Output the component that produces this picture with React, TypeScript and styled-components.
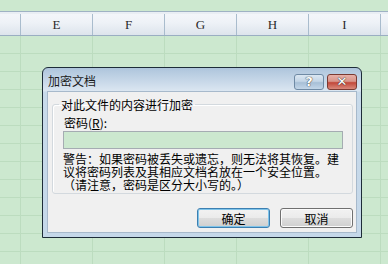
import React from "react";
import styled, { createGlobalStyle } from "styled-components";

const GlobalStyle = createGlobalStyle`
  html, body {
    margin: 0;
    padding: 0;
    background: #cce8cf;
    overflow: hidden;
  }
  body {
    font-family: "Noto Sans CJK SC", "Liberation Sans", sans-serif;
    font-size: 12px;
  }
`;

const Page = styled.div`
  position: relative;
  width: 388px;
  height: 264px;
  overflow: hidden;
  background: #cce8cf;
`;

const TopStrip = styled.div`
  height: 11px;
  border-bottom: 1px solid #9fb2c4;
`;

const HeaderRow = styled.div`
  display: grid;
  grid-template-columns: 21px repeat(6, 72px);
  height: 21px;
  background: linear-gradient(#f3f6fa 0%, #eef2f7 40%, #dde4ec 100%);
  border-top: 2px solid #e9eef4;
  border-bottom: 1px solid #9aaec2;
`;

const HeaderCell = styled.div`
  display: flex;
  align-items: center;
  justify-content: center;
  border-right: 1px solid #a9bccd;
  font-family: "Liberation Serif", serif;
  font-size: 13px;
  color: #2a2a2a;
`;

const GridRow = styled.div`
  display: grid;
  grid-template-columns: 21px repeat(6, 72px);
  height: 18px;
`;

const GridCell = styled.div`
  border-right: 1px solid #bcdcbf;
  border-bottom: 1px solid #bcdcbf;
`;

const Dialog = styled.div`
  position: absolute;
  left: 42px;
  top: 67px;
  width: 318px;
  height: 169px;
  border: 1px solid #1d2c38;
  border-radius: 6px 6px 0 0;
  background: linear-gradient(#aec5dc 0px, #c9d9e9 14px, #dbe6f1 23px, #c8daea 24px, #c5d8e9 100%);
  display: flex;
  flex-direction: column;
`;

const TitleBar = styled.div`
  height: 22px;
  display: flex;
  align-items: center;
  padding: 0 4px 0 5px;
`;

const Title = styled.div`
  flex: 1;
  font-size: 12px;
  color: #1a1a1a;
  margin-top: 2px;
`;

const CaptionButton = styled.div<{ $close?: boolean }>`
  width: 28px;
  height: 14px;
  margin-left: 3px;
  margin-top: 5px;
  border: 1px solid ${(p) => (p.$close ? "#7a3a32" : "#6f8aa4")};
  border-radius: 3px;
  background: ${(p) =>
    p.$close
      ? "linear-gradient(#e7b0a8 0%, #d8958a 45%, #c2483a 55%, #d98a7c 100%)"
      : "linear-gradient(#dbe7f2 0%, #c3d5e6 45%, #a7bfd6 55%, #c3d6e8 100%)"};
  display: flex;
  align-items: center;
  justify-content: center;
  font-family: "DejaVu Sans", sans-serif;
  font-weight: bold;
  font-size: 13px;
  color: #fff;
  text-shadow: 0 0 1px #333, 0 0 1px #333;
`;

const Body = styled.div`
  flex: 1;
  margin: 1px 4px 4px 4px;
  background: #f0f0f0;
  border: 1px solid #a7b9cb;
  padding: 6px 3px 0 4px;
  display: flex;
  flex-direction: column;
`;

const Group = styled.fieldset`
  margin: 0;
  padding: 5px 9px 2px 10px;
  border: 1px solid #d3d9de;
  border-radius: 3px;
  box-shadow: inset 1px 1px 0 #fff;
  min-width: 0;
`;

const Legend = styled.legend`
  padding: 0 2px;
  margin-left: -4px;
  font-size: 12px;
  line-height: 13px;
  color: #000;
`;

const Label = styled.div`
  font-size: 12px;
  line-height: 13px;
  color: #000;
  margin-left: 1px;
`;

const Underline = styled.span`
  text-decoration: underline;
`;

const PasswordInput = styled.div`
  margin-top: 2px;
  height: 16px;
  border: 1px solid #a5acb2;
  background: #cce8cf;
`;

const Warning = styled.div`
  margin-top: 3px;
  font-size: 12px;
  line-height: 13px;
  color: #000;
  white-space: nowrap;
`;

const ButtonRow = styled.div`
  display: flex;
  justify-content: flex-end;
  gap: 10px;
  margin-top: 14px;
`;

const Button = styled.div<{ $default?: boolean }>`
  width: 71px;
  height: 18px;
  border: 1px solid ${(p) => (p.$default ? "#3c7fb1" : "#707070")};
  border-radius: 3px;
  background: linear-gradient(#f2f2f2 0%, #ebebeb 48%, #dddddd 52%, #cfcfcf 100%);
  box-shadow: ${(p) => (p.$default ? "inset 0 0 0 1px #7fc4ea" : "inset 0 0 0 1px #fbfbfb")};
  display: flex;
  align-items: center;
  justify-content: center;
  font-size: 12px;
  color: #000;
`;

const columns = ["", "E", "F", "G", "H", "I", ""];

export default function App() {
  return (
    <Page>
      <GlobalStyle />
      <TopStrip />
      <HeaderRow>
        {columns.map((c, i) => (
          <HeaderCell key={i}>{c}</HeaderCell>
        ))}
      </HeaderRow>
      {Array.from({ length: 13 }).map((_, r) => (
        <GridRow key={r}>
          {columns.map((_, i) => (
            <GridCell key={i} />
          ))}
        </GridRow>
      ))}

      <Dialog>
        <TitleBar>
          <Title>加密文档</Title>
          <CaptionButton>?</CaptionButton>
          <CaptionButton $close>✕</CaptionButton>
        </TitleBar>
        <Body>
          <Group>
            <Legend>对此文件的内容进行加密</Legend>
            <Label>
              密码(<Underline>R</Underline>):
            </Label>
            <PasswordInput />
            <Warning>
              警告：如果密码被丢失或遗忘，则无法将其恢复。建
              <br />
              议将密码列表及其相应文档名放在一个安全位置。
              <br />
              （请注意，密码是区分大小写的。）
            </Warning>
          </Group>
          <ButtonRow>
            <Button $default>确定</Button>
            <Button>取消</Button>
          </ButtonRow>
        </Body>
      </Dialog>
    </Page>
  );
}
